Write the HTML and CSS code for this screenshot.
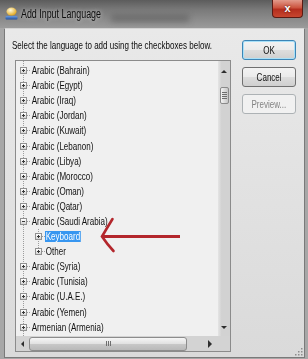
FILE: index.html
```html
<!DOCTYPE html>
<html lang="en">
<head>
    <meta charset="UTF-8">
    <title>Add Input Language</title>
    <link rel="stylesheet" href="styles.css">
</head>
<body>
    <div class="window">
        <div class="titlebar">
            <svg class="app-icon" viewBox="0 0 13 13">
                <defs>
                    <radialGradient id="ball" cx="40%" cy="35%" r="65%">
                        <stop offset="0" stop-color="#fffbe0"/>
                        <stop offset="1" stop-color="#e2a91f"/>
                    </radialGradient>
                    <linearGradient id="base" x1="0" y1="0" x2="0" y2="1">
                        <stop offset="0" stop-color="#6a9be0"/>
                        <stop offset="1" stop-color="#24509a"/>
                    </linearGradient>
                </defs>
                <ellipse cx="6.5" cy="4.5" rx="5" ry="4" fill="url(#ball)"/>
                <rect x="0.5" y="9" width="12" height="3.5" rx="1" fill="url(#base)"/>
            </svg>
            <span class="title">Add Input Language</span>
            <span class="smudge"></span>
            <button class="close-btn">x</button>
        </div>

        <div class="client">
            <div class="main">
                <p class="intro"><span class="narrow">Select the language to add using the checkboxes below.</span></p>
                <div class="tree-box">
                    <div class="tree">
                        <div class="row"><span class="exp"></span><span class="tick"></span><span class="label">Arabic (Bahrain)</span></div>
                        <div class="row"><span class="exp"></span><span class="tick"></span><span class="label">Arabic (Egypt)</span></div>
                        <div class="row"><span class="exp"></span><span class="tick"></span><span class="label">Arabic (Iraq)</span></div>
                        <div class="row"><span class="exp"></span><span class="tick"></span><span class="label">Arabic (Jordan)</span></div>
                        <div class="row"><span class="exp"></span><span class="tick"></span><span class="label">Arabic (Kuwait)</span></div>
                        <div class="row"><span class="exp"></span><span class="tick"></span><span class="label">Arabic (Lebanon)</span></div>
                        <div class="row"><span class="exp"></span><span class="tick"></span><span class="label">Arabic (Libya)</span></div>
                        <div class="row"><span class="exp"></span><span class="tick"></span><span class="label">Arabic (Morocco)</span></div>
                        <div class="row"><span class="exp"></span><span class="tick"></span><span class="label">Arabic (Oman)</span></div>
                        <div class="row"><span class="exp"></span><span class="tick"></span><span class="label">Arabic (Qatar)</span></div>
                        <div class="row"><span class="exp open"></span><span class="tick"></span><span class="label">Arabic (Saudi Arabia)</span></div>
                        <div class="children">
                            <div class="row"><span class="exp"></span><span class="tick"></span><span class="label selected">Keyboard</span></div>
                            <div class="row"><span class="exp"></span><span class="tick"></span><span class="label">Other</span></div>
                        </div>
                        <div class="row"><span class="exp"></span><span class="tick"></span><span class="label">Arabic (Syria)</span></div>
                        <div class="row"><span class="exp"></span><span class="tick"></span><span class="label">Arabic (Tunisia)</span></div>
                        <div class="row"><span class="exp"></span><span class="tick"></span><span class="label">Arabic (U.A.E.)</span></div>
                        <div class="row"><span class="exp"></span><span class="tick"></span><span class="label">Arabic (Yemen)</span></div>
                        <div class="row"><span class="exp"></span><span class="tick"></span><span class="label">Armenian (Armenia)</span></div>
                    </div>
                    <div class="vscroll">
                        <span class="arrow-up"></span>
                        <span class="vthumb"><i></i><i></i><i></i><i></i></span>
                        <span class="arrow-down"></span>
                    </div>
                    <div class="hscroll">
                        <span class="arrow-left"></span>
                        <span class="hthumb"><i></i><i></i><i></i></span>
                        <span class="arrow-right"></span>
                    </div>
                    <div class="corner"></div>
                </div>
            </div>

            <div class="actions">
                <button class="btn default"><span class="narrow">OK</span></button>
                <button class="btn"><span class="narrow">Cancel</span></button>
                <button class="btn" disabled><span class="narrow">Preview...</span></button>
            </div>

            <svg class="grip" viewBox="0 0 10 10">
                <rect x="8" y="2" width="1.5" height="1.5" fill="#8d8d8d"/>
                <rect x="5" y="5" width="1.5" height="1.5" fill="#8d8d8d"/>
                <rect x="8" y="5" width="1.5" height="1.5" fill="#8d8d8d"/>
                <rect x="2" y="8" width="1.5" height="1.5" fill="#8d8d8d"/>
                <rect x="5" y="8" width="1.5" height="1.5" fill="#8d8d8d"/>
                <rect x="8" y="8" width="1.5" height="1.5" fill="#8d8d8d"/>
            </svg>
        </div>

        <!-- red annotation arrow pointing at Keyboard -->
        <svg class="note-arrow" viewBox="0 0 84 38">
            <path d="M13.5 3 Q8 12 3 20.5 Q8 28 14.5 35" fill="none" stroke="#b3262c" stroke-width="2.6" stroke-linecap="round"/>
            <line x1="3" y1="20.5" x2="81" y2="20.5" stroke="#b3262c" stroke-width="3"/>
        </svg>
    </div>
</body>
</html>
```

FILE: styles.css
```css
* { box-sizing: border-box; }

body {
    margin: 0;
    width: 308px;
    height: 359px;
    overflow: hidden;
    background: #a7a7a7;
    font-family: "Liberation Sans", Arial, sans-serif;
    font-size: 11px;
    color: #111;
}

/* the dialog's font is a narrow one: squeeze Liberation Sans to match */
.narrow,
.title,
.label {
    display: inline-block;
    transform: scaleX(0.73);
    transform-origin: left center;
}

.window {
    position: relative;
    height: 359px;
    display: flex;
    flex-direction: column;
}

/* title bar */
.titlebar {
    height: 28px;
    flex: none;
    display: flex;
    align-items: flex-start;
    padding-left: 5px;
    background: linear-gradient(#5c5c5c, #7a7a7a 35%, #9b9b9b);
}
.app-icon {
    width: 13px;
    height: 13px;
    margin-top: 7px;
    flex: none;
}
.title {
    width: 82px;
    margin: 7px 0 0 3px;
    font-size: 12px;
    line-height: 14px;
    color: #0e0e0e;
    text-shadow: 0 0 5px rgba(235,235,235,0.8);
    white-space: nowrap;
    transform: scaleX(0.74);
}
.smudge {
    margin: 15px 0 0 8px;
    width: 78px;
    height: 7px;
    background: rgba(50,50,50,0.35);
    filter: blur(3px);
}
.close-btn {
    margin-left: auto;
    margin-right: 5px;
    width: 31px;
    height: 18px;
    padding: 0;
    border: 1px solid #5b1a13;
    border-top: 0;
    border-radius: 0 0 4px 4px;
    background: linear-gradient(#e29a8b, #cc543f 45%, #b42e1e 55%, #c7462f);
    color: #fff;
    font: bold 11px "Liberation Sans", sans-serif;
    line-height: 15px;
    text-shadow: 0 0 2px #3a0d08;
}

/* client area */
.client {
    flex: 1;
    position: relative;
    display: flex;
    margin: 0 3px 1px 4px;
    border: 1px solid #7a7a7a;
    border-top-color: #d4d4d4;
    background: linear-gradient(#e9e9e9, #dadada);
}
.main {
    width: 226px;
    flex: none;
    padding: 10px 0 0 7px;
}
.intro {
    margin: 0;
    height: 12px;
    line-height: 12px;
    color: #0c0c0c;
    white-space: nowrap;
}

.tree-box {
    margin: 9px 0 0 3px;
    width: 216px;
    height: 292px;
    border: 1px solid #8b8b8b;
    display: grid;
    grid-template-columns: 202px 12px;
    grid-template-rows: 275px 15px;
}
.tree {
    padding-top: 2px;
    overflow: hidden;
    background: repeating-linear-gradient(#9d9d9d 0 1px, transparent 1px 2px) 7px 0 / 1px 100% no-repeat, #f0f0f0;
}
.row {
    height: 15.1px;
    display: flex;
    align-items: center;
    padding-left: 4px;
}
.exp {
    width: 7px;
    height: 7px;
    flex: none;
    border: 1px solid #909090;
    background:
        linear-gradient(#383838, #383838) center / 3px 1px no-repeat,
        linear-gradient(#383838, #383838) center / 1px 3px no-repeat,
        linear-gradient(#ffffff, #d4d4d4);
}
.exp.open {
    background:
        linear-gradient(#383838, #383838) center / 3px 1px no-repeat,
        linear-gradient(#ffffff, #d4d4d4);
}
.tick {
    width: 4px;
    height: 1px;
    flex: none;
    background: repeating-linear-gradient(90deg, #9d9d9d 0 1px, transparent 1px 2px);
}
.label {
    padding: 0 1px;
    line-height: 11px;
    white-space: nowrap;
}
.label.selected {
    background: #3796f0;
    color: #fff;
}
.children {
    background: repeating-linear-gradient(#9d9d9d 0 1px, transparent 1px 2px) 22px 0 / 1px 22px no-repeat;
}
.children .row { padding-left: 19px; }
.children .tick { width: 3px; }

/* scrollbars */
.vscroll {
    display: flex;
    flex-direction: column;
    align-items: center;
    background: linear-gradient(90deg, #e4e4e4, #d2d2d2 30%);
}
.arrow-up, .arrow-down {
    width: 0;
    border: 3px solid transparent;
}
.arrow-up {
    margin-top: 9px;
    border-top-width: 0;
    border-bottom-color: #2e2e2e;
}
.arrow-down {
    margin-top: auto;
    margin-bottom: 7px;
    border-bottom-width: 0;
    border-top-color: #2e2e2e;
}
.vthumb {
    margin-top: 14px;
    width: 9px;
    height: 17px;
    border: 1px solid #8a8a8a;
    border-radius: 2px;
    background: linear-gradient(90deg, #f4f4f4, #dcdcdc 50%, #c6c6c6);
    display: flex;
    flex-direction: column;
    align-items: center;
    justify-content: center;
    gap: 1px;
}
.vthumb i {
    width: 5px;
    height: 1px;
    background: #6e6e6e;
}
.hscroll {
    display: flex;
    align-items: center;
    background: #d3d3d3;
}
.arrow-left, .arrow-right {
    height: 0;
    border: 3px solid transparent;
}
.arrow-left {
    margin-left: 5px;
    border-left-width: 0;
    border-right-color: #2e2e2e;
}
.arrow-right {
    margin-left: auto;
    margin-right: 6px;
    border-left-color: #2e2e2e;
    border-width: 4px 0 4px 4px;
}
.hthumb {
    margin-left: 5px;
    width: 158px;
    height: 14px;
    border: 1px solid #8c8c8c;
    border-radius: 3px;
    background: linear-gradient(#f6f6f6, #e0e0e0 50%, #c8c8c8 51%, #b9b9b9);
    display: flex;
    justify-content: center;
    align-items: center;
    gap: 1px;
}
.hthumb i {
    width: 1px;
    height: 5px;
    background: #6e6e6e;
}
.corner {
    background: #d3d3d3;
}

/* buttons */
.actions {
    margin-left: 11px;
    padding-top: 11px;
    display: flex;
    flex-direction: column;
    gap: 7px;
}
.btn {
    width: 54px;
    height: 20px;
    padding: 0;
    border: 1px solid #707070;
    border-radius: 3px;
    background: linear-gradient(#f3f3f3, #ebebeb 50%, #dddddd 51%, #cfcfcf);
    font-family: inherit;
    font-size: 11px;
    color: #111;
}
.btn .narrow {
    transform-origin: center center;
}
.btn.default {
    border-color: #3c85b6;
    box-shadow: inset 0 0 0 1px #a8e0f8;
}
.btn:disabled {
    border-color: #adb2b5;
    background: #f1f1f1;
    color: #838383;
}

.grip {
    position: absolute;
    right: 1px;
    bottom: 1px;
    width: 10px;
    height: 10px;
}

.note-arrow {
    position: absolute;
    left: 99px;
    top: 216px;
    width: 84px;
    height: 38px;
}
```
